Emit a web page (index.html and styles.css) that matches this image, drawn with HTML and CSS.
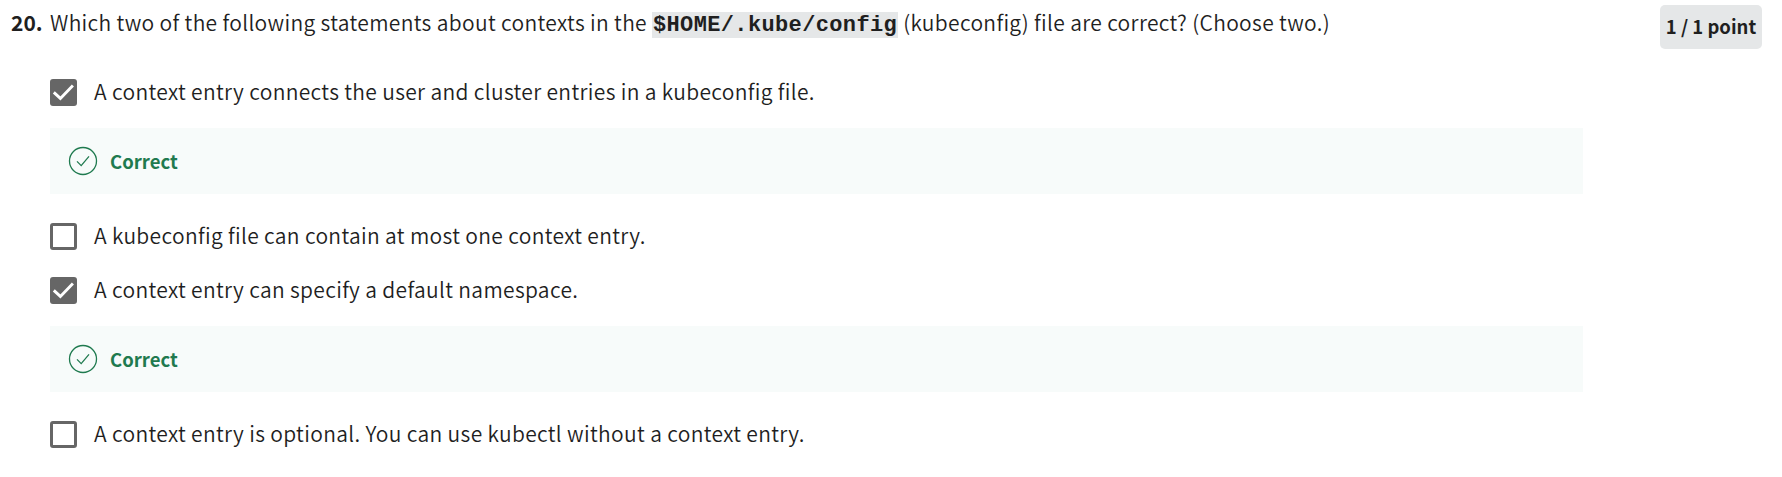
FILE: index.html
```
<!DOCTYPE html>
<html lang="en">
<head>
<meta charset="utf-8">
<title>Quiz question</title>
<link rel="stylesheet" href="styles.css">
</head>
<body>
<svg class="sprite" aria-hidden="true">
  <symbol id="tick" viewBox="0 0 27 27"><path d="M3.8 13.4 10.4 19.4 22.9 6.6" fill="none" stroke="#fff" stroke-width="2.9"/></symbol>
  <symbol id="ok" viewBox="0 0 30 30"><circle cx="15" cy="15" r="13.5" fill="none" stroke="currentColor" stroke-width="1.3"/><path d="M9 15.4 13.2 19.6 21 10.4" fill="none" stroke="currentColor" stroke-width="1.3"/></symbol>
</svg>
<main class="question">
  <div class="number">20.</div>
  <div class="body">
    <p class="prompt">Which two of the following statements about contexts in the <code class="code">$HOME/.kube/config</code> (kubeconfig) file are correct? (Choose two.)</p>
    <div class="options">
      <div class="option"><span class="box checked"><svg class="tick"><use href="#tick"/></svg></span><span class="label">A context entry connects the user and cluster entries in a kubeconfig file.</span></div>
      <div class="feedback"><svg class="ok"><use href="#ok"/></svg><span class="verdict">Correct</span></div>
      <div class="option"><span class="box"></span><span class="label">A kubeconfig file can contain at most one context entry.</span></div>
      <div class="option"><span class="box checked"><svg class="tick"><use href="#tick"/></svg></span><span class="label">A context entry can specify a default namespace.</span></div>
      <div class="feedback"><svg class="ok"><use href="#ok"/></svg><span class="verdict">Correct</span></div>
      <div class="option"><span class="box"></span><span class="label">A context entry is optional. You can use kubectl without a context entry.</span></div>
    </div>
  </div>
  <div class="points">1 / 1 point</div>
</main>
</body>
</html>
```
FILE: styles.css
```
* { box-sizing: border-box; }
body {
  margin: 0;
  background: #fff;
  color: #1f1f1f;
  font-family: "Noto Sans CJK SC", "Noto Sans", sans-serif;
  font-size: 21px;
  line-height: 30px;
  white-space: nowrap;
}
.sprite { display: none; }
.question {
  display: flex;
  align-items: flex-start;
  height: 477px;
  padding: 5px 20px 0 11px;
}
.number { width: 39px; padding-top: 2px; font-weight: 700; }
.body { width: 1533px; }
.prompt, .label {
  font-family: "Noto Sans CJK SC DemiLight", "Noto Sans CJK SC", "Noto Sans", sans-serif;
  font-weight: 350;
  letter-spacing: 0.335px;
}
.prompt { margin: 0; padding-top: 2px; height: 60px; }
.label { padding-bottom: 2px; }
.code {
  display: inline-block;
  height: 26px;
  padding: 0 1px;
  background: #e5e7e8;
  font: 700 22px/27px "Liberation Mono", monospace;
  letter-spacing: 0.36px;
}
.options { display: flex; flex-direction: column; }
.option { display: flex; align-items: center; gap: 17px; height: 54px; }
.box {
  flex: none;
  width: 27px;
  height: 27px;
  border: 3px solid #666;
  border-radius: 3px;
}
.checked { border: 0; background: #666; }
.tick { display: block; width: 27px; height: 27px; }
.feedback {
  display: flex;
  align-items: center;
  gap: 12px;
  height: 66px;
  margin: 9px 0 15px;
  padding-left: 18px;
  background: #f7fbfa;
  color: #1f7a4f;
}
.ok { width: 30px; height: 30px; }
.verdict { font-size: 18.5px; font-weight: 700; }
.points {
  width: 102px;
  height: 44px;
  margin-left: auto;
  border-radius: 5px;
  background: #e5e7e8;
  font-size: 18.5px;
  font-weight: 700;
  line-height: 43px;
  text-align: center;
}
```
